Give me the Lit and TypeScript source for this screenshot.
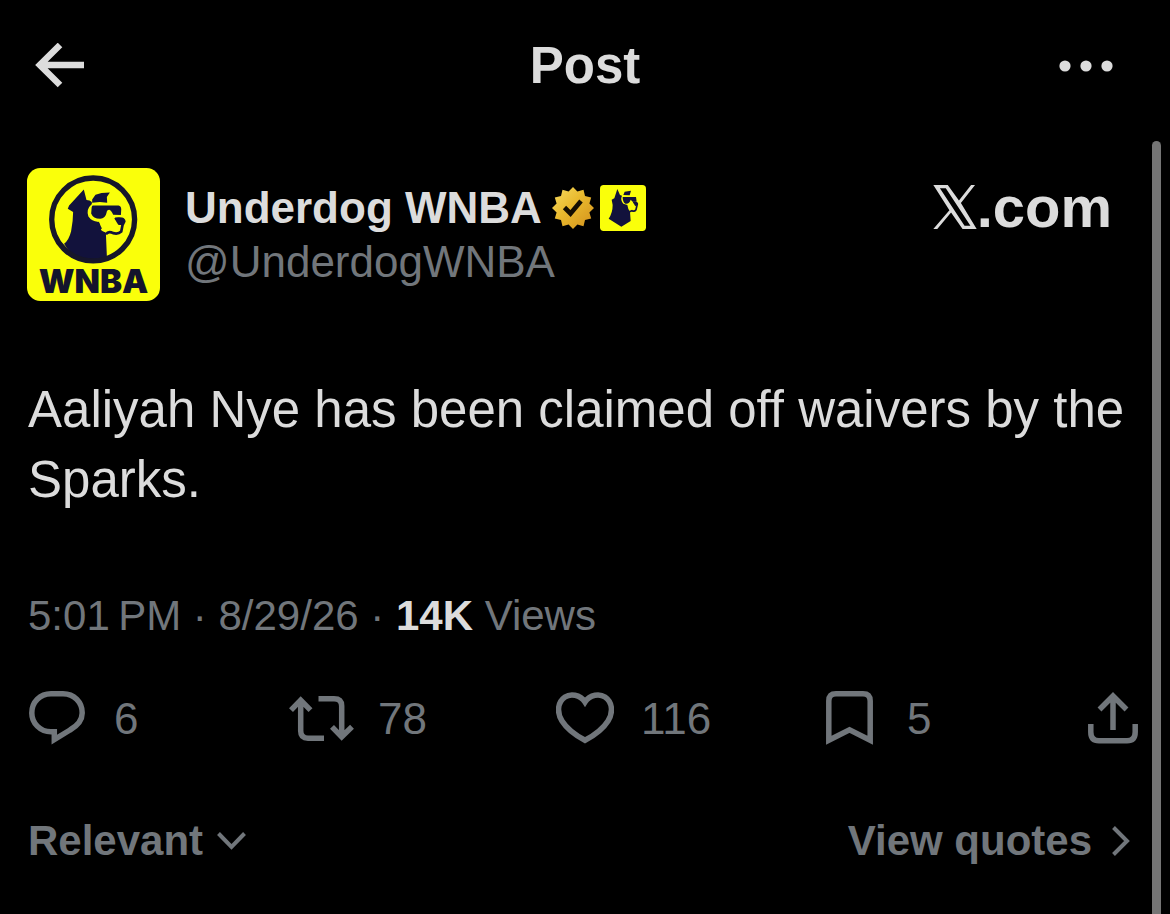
import { LitElement, html, css, svg } from "lit";
import { customElement, property } from "lit/decorators.js";

const dogHead = svg`
  <path fill="#12123c" d="M222 120 L230 152 Q240 152 246 158 L246 166 Q234 178 237 194 Q240 208 254 213 L268 217
    Q274 240 288 250 L291 320 Q270 336 235 334 Q190 330 163 283 Q178 270 184 245 Q190 215 190 188 L174 178 L178 168 Z"/>
  <path fill="#12123c" d="M247 150 L257 136 L275 131 L300 129 L291 143 L292 160 L270 158 L247 160 Z"/>
  <path fill="#12123c" d="M246 168 L326 168 Q334 170 334 180 L333 197 L310 196 Q304 182 298 181 Q291 181 290 190
    Q287 207 271 208 Q250 208 244 192 Z"/>
  <path fill="#faff0a" d="M268 218 Q285 212 296 200 L303 203 L319 222 L334 232 L331 246 L312 250 Q298 238 290 249 Q276 246 273 240 L280 232 Z"/>
  <path fill="none" stroke="#12123c" stroke-width="8" d="M316 208 Q342 204 343 216 L338 226 L334 246 Q325 255 310 251 Q296 243 288 254"/>
  <path fill="#12123c" d="M313 206 Q343 202 345 216 Q340 230 325 226 Z"/>
  <path fill="none" stroke="#faff0a" stroke-width="5" d="M247 166 Q231 180 238 200 Q250 218 274 213 Q290 208 297 188"/>
`;

@customElement("team-avatar")
export class TeamAvatar extends LitElement {
  static styles = css`
    :host { display: block; flex: none; width: 133px; height: 133px; }
    svg { display: block; width: 100%; height: 100%; }
    .word { font: 900 99px Inter, "Liberation Sans", sans-serif; fill: #14142c; }
  `;
  render() {
    return html`<svg viewBox="52 56 398 398" role="img" aria-label="Underdog WNBA avatar">
      <rect x="52" y="56" width="398" height="398" rx="40" fill="#faff0a"/>
      ${dogHead}
      <circle cx="250" cy="210" r="124" fill="none" stroke="#16162a" stroke-width="16"/>
      <text class="word" x="251" y="430" text-anchor="middle">WNBA</text>
    </svg>`;
  }
}

@customElement("post-stat")
export class PostStat extends LitElement {
  @property() label = "";
  @property() count = "";
  static styles = css`
    :host { display: block; }
    button {
      display: flex; align-items: center; gap: 27px; padding: 0; border: 0; background: none;
      color: inherit; font: inherit; line-height: 54px; height: 54px; cursor: pointer;
    }
    span { padding-top: 2px; }
  `;
  render() {
    return html`<button aria-label="${this.label} ${this.count}"><slot></slot>${this.count ? html`<span>${this.count}</span>` : ""}</button>`;
  }
}

@customElement("app-root")
export class AppRoot extends LitElement {
  static styles = css`
    :host {
      display: block; position: relative; box-sizing: border-box; min-height: 100vh; background: #000;
      color: #dcdcdc; font-family: "Liberation Sans", Arial, sans-serif;
    }
    svg { display: block; flex: none; }
    .line { fill: none; stroke: currentColor; stroke-width: 5.5; }
    .back .line { stroke-width: 6.5; }
    button { padding: 0; border: 0; background: none; color: inherit; font: inherit; cursor: pointer; }
    a { color: inherit; text-decoration: none; }
    .top {
      display: grid; grid-template-columns: 1fr auto 1fr; align-items: center;
      height: 132px; padding: 0 57px 0 35px;
    }
    .top h1 { margin: 0 0 0 22px; font-size: 51px; line-height: 60px; }
    .back { justify-self: start; }
    .more { justify-self: end; }
    .post { padding: 36px 32px 48px 28px; }
    .author { display: flex; align-items: center; gap: 25px; margin-left: -1px; }
    .who { flex: 1; min-width: 0; }
    .name { display: flex; align-items: center; gap: 6px; font-size: 44px; line-height: 54px; font-weight: 700; }
    .name a { margin-right: 4px; }
    .handle { display: block; font-size: 44px; line-height: 54px; color: #71767b; }
    .brand {
      display: flex; align-items: center; align-self: flex-start; padding: 12px 26px 0 0;
      font-size: 58px; line-height: 54px; font-weight: 700;
    }
    .body { margin: 74px 0 0; font-size: 51px; line-height: 70px; }
    .meta { margin: 76px 0 0; font-size: 42px; line-height: 50px; color: #71767b; }
    .meta strong { color: #dcdcdc; }
    .stats {
      display: grid; grid-template-columns: 260fr 267fr 270fr 262fr auto; align-items: center;
      margin: 50px 0 0 1px; font-size: 44px; color: #71767b;
    }
    .foot {
      display: flex; justify-content: space-between; margin-top: 71px;
      font-size: 42px; line-height: 50px; font-weight: 700; color: #71767b;
    }
    .foot a, .foot button { display: flex; align-items: center; gap: 14px; line-height: 50px; }
    .foot a { gap: 20px; margin-right: 8px; }
    .foot .line { stroke-width: 4; }
    .scroll {
      position: absolute; top: 141px; bottom: 0; right: 9px; width: 9px;
      border-radius: 5px 5px 0 0; background: #757575;
    }
  `;

  render() {
    return html`
      <header class="top">
        <button class="back" aria-label="Back">
          <svg width="49" height="46" viewBox="0 0 49 46"><path class="line" d="M49 22H5M25 2L4.8 22L25 42"/></svg>
        </button>
        <h1>Post</h1>
        <button class="more" aria-label="More">
          <svg width="54" height="12" viewBox="0 0 54 12" fill="currentColor"><circle cx="6" cy="6" r="5.6"/><circle cx="27" cy="6" r="5.6"/><circle cx="48" cy="6" r="5.6"/></svg>
        </button>
      </header>
      <main class="post">
        <div class="author">
          <team-avatar></team-avatar>
          <div class="who">
            <div class="name">
              <a href="#profile">Underdog WNBA</a>
              ${this.badge()}
              <svg width="46" height="46" viewBox="0 0 138 138" role="img" aria-label="Underdog">
                <rect width="138" height="138" rx="11" fill="#faff0a"/>
                <path fill="#12123c" d="M52 12 L60 30 L66 32 Q60 44 70 56 L82 60 Q84 74 90 80 L92 108 L64 125 L26 101 Q38 84 38 60 L35 44 L43 40 Z"/>
                <path fill="#12123c" d="M70 30 L74 20 L93 17 L89 31 Z M68 36 L108 36 L110 50 L98 50 L92 44 Q88 58 76 56 Q68 52 68 36Z"/>
                <path fill="none" stroke="#12123c" stroke-width="5" d="M101 52 Q112 52 112 57 L108 74 Q103 81 96 77 L88 80"/>
                <path fill="#12123c" d="M98 50 Q113 49 114 57 L106 64Z"/>
              </svg>
            </div>
            <a class="handle" href="#profile">@UnderdogWNBA</a>
          </div>
          <div class="brand">
            <svg width="44" height="44" viewBox="0 0 132 134" aria-label="X" role="img">
              <path fill="currentColor" fill-rule="evenodd" d="M0 0H44L78 47L115 0H127L84 55L132 134H89L54 84L12 134H0L49 77Z M20 10L95 124H113L38 10Z"/>
            </svg><span>.com</span>
          </div>
        </div>
        <p class="body">Aaliyah Nye has been claimed off waivers by the Sparks.</p>
        <p class="meta">5:01&#8201;PM · 8/29/26 · <strong>14K</strong> Views</p>
        <div class="stats">
          <post-stat label="Replies" count="6">
            <svg width="58" height="54" viewBox="0 0 58 54"><path class="line" d="M22 2.8H34C45 2.8 53.2 11 53.2 22C53.2 30 48 35 41 39L25.3 48.6V40.8H22C11 40.8 2.8 32 2.8 22C2.8 11 11 2.8 22 2.8Z"/></svg>
          </post-stat>
          <post-stat label="Reposts" count="78">
            <svg width="62" height="45" viewBox="0 0 62 45" overflow="visible"><path class="line" d="M2 14.2L11.7 4.2L21.5 14.2M11.7 4V35Q11.7 42.2 19 42.2H35M29.5 2.8H45Q52.7 2.8 52.7 10V41M43 30.8L52.7 40.8L63 30.8"/></svg>
          </post-stat>
          <post-stat label="Likes" count="116">
            <svg width="58" height="52" viewBox="0 0 58 52"><path class="line" d="M29 10C24 2 14 1.5 9 5C1 10.5 1 21 6 29C11 37 19 43 29 48.3C39 43 47 37 52 29C57 21 57 10.5 49 5C44 1.5 34 2 29 10Z"/></svg>
          </post-stat>
          <post-stat label="Bookmarks" count="5">
            <svg width="54" height="54" viewBox="0 0 54 54"><path class="line" d="M2.8 49.3V10Q2.8 2.8 10 2.8H37Q44.2 2.8 44.2 10V49.3L23.5 38.8Z"/></svg>
          </post-stat>
          <post-stat label="Share">
            <svg width="50" height="52" viewBox="0 0 50 52"><path class="line" d="M2.8 32V40Q2.8 48.8 11 48.8H39Q47.2 48.8 47.2 40V32M25 38V4M11.5 17.5L25 4L38.5 17.5"/></svg>
          </post-stat>
        </div>
        <div class="foot">
          <button>Relevant<svg width="29" height="18" viewBox="0 0 29 18"><path class="line" d="M1.5 1.5L14.5 14.8L27.5 1.5"/></svg></button>
          <a href="#quotes">View quotes<svg width="18" height="30" viewBox="0 0 18 30"><path class="line" d="M1.5 1.5L15 15L1.5 28.5"/></svg></a>
        </div>
      </main>
      <div class="scroll"></div>
    `;
  }

  private badge() {
    const points = Array.from({ length: 24 }, (_, i) => {
      const r = i % 2 ? 17 : 21;
      const a = (i * Math.PI) / 12 - Math.PI / 2;
      return `${(21 + r * Math.cos(a)).toFixed(1)},${(21 + r * Math.sin(a)).toFixed(1)}`;
    }).join(" ");
    return html`<svg width="42" height="42" viewBox="0 0 42 42" role="img" aria-label="Verified organization">
      <defs><linearGradient id="gold" x1="0" y1="0" x2="1" y2="1">
        <stop offset="0" stop-color="#f6dc62"/><stop offset=".45" stop-color="#e9b92d"/><stop offset="1" stop-color="#d2901c"/>
      </linearGradient></defs>
      <polygon points=${points} fill="url(#gold)"/>
      <path fill="none" stroke="#140e02" stroke-width="4.6" d="M12.5 20.5L18.5 26.5L29 14"/>
    </svg>`;
  }
}
